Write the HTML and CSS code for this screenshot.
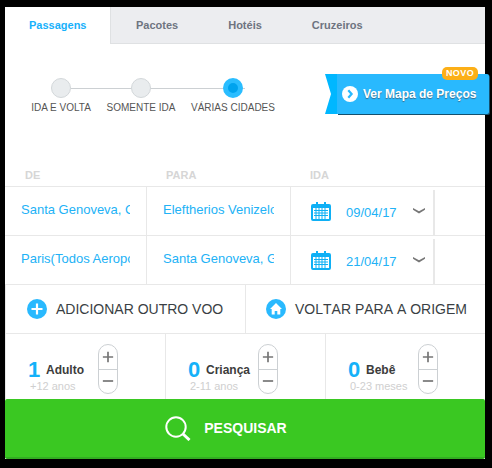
FILE: index.html
```html
<!DOCTYPE html>
<html lang="pt-BR">
<head>
<meta charset="utf-8">
<title>Passagens</title>
<link rel="stylesheet" href="styles.css">
</head>
<body>
<main class="panel">
  <nav class="tabs">
    <a class="tab tab-active">Passagens</a>
    <a class="tab tab-pacotes">Pacotes</a>
    <a class="tab tab-hoteis">Hotéis</a>
    <a class="tab tab-cruzeiros">Cruzeiros</a>
  </nav>

  <section class="options">
    <div class="steps">
      <span class="steps-line"></span>
      <div class="step step-1"><span class="dot"></span><span class="step-label">IDA E VOLTA</span></div>
      <div class="step step-2"><span class="dot"></span><span class="step-label">SOMENTE IDA</span></div>
      <div class="step step-3"><span class="dot dot-on"></span><span class="step-label">VÁRIAS CIDADES</span></div>
    </div>
    <a class="ribbon">
      <svg class="ribbon-tail" width="12" height="40" viewBox="0 0 12 40"><path d="M0 0H12V40H0L6 20Z" fill="#00b7ff"/></svg>
      <span class="ribbon-body">
        <svg class="ribbon-icon" width="16" height="16" viewBox="0 0 16 16"><circle cx="8" cy="8" r="8" fill="#fff"/><path d="M6.3 4.3 9.6 8 6.3 11.7" fill="none" stroke="#29b9fe" stroke-width="2.2"/></svg>
        <span class="ribbon-text">Ver Mapa de Preços</span>
      </span>
      <span class="badge">NOVO</span>
    </a>
  </section>

  <div class="flights">
    <div class="flight-head">
      <span class="head-de">DE</span>
      <span class="head-para">PARA</span>
      <span class="head-ida">IDA</span>
    </div>
    <div class="flight-row">
      <div class="cell cell-from"><span class="place">Santa Genoveva, Goiânia</span></div>
      <div class="cell cell-to"><span class="place">Eleftherios Venizelos</span></div>
      <div class="cell cell-date">
        <svg class="cal" width="20" height="19" viewBox="0 0 20 19"><use href="#cal-icon"/></svg>
        <span class="date">09/04/17</span>
        <svg class="chev" width="12" height="6" viewBox="0 0 12 6"><path d="M0 0 6 3.200 12 0V1.800L6 5.500 0 1.800Z" fill="#777"/></svg>
      </div>
      <div class="cell cell-end"></div>
    </div>
    <div class="flight-row">
      <div class="cell cell-from"><span class="place">Paris(Todos Aeroportos)</span></div>
      <div class="cell cell-to"><span class="place">Santa Genoveva, Goiânia</span></div>
      <div class="cell cell-date">
        <svg class="cal" width="20" height="19" viewBox="0 0 20 19"><use href="#cal-icon"/></svg>
        <span class="date">21/04/17</span>
        <svg class="chev" width="12" height="6" viewBox="0 0 12 6"><path d="M0 0 6 3.200 12 0V1.800L6 5.500 0 1.800Z" fill="#777"/></svg>
      </div>
      <div class="cell cell-end"></div>
    </div>
  </div>

  <div class="actions">
    <a class="action action-add">
      <svg width="20" height="20" viewBox="0 0 20 20"><circle cx="10" cy="10" r="10" fill="#29b9fe"/><path d="M10 4.5V15.500M4.500 10H15.500" stroke="#fff" stroke-width="2.200"/></svg>
      <span>ADICIONAR OUTRO VOO</span>
    </a>
    <a class="action action-back">
      <svg width="20" height="20" viewBox="0 0 20 20"><circle cx="10" cy="10" r="10" fill="#29b9fe"/><path d="M10 4 16 10H14.300V15.500H11.300V12H8.700V15.500H5.700V10H4Z" fill="#fff"/></svg>
      <span>VOLTAR PARA A ORIGEM</span>
    </a>
  </div>

  <div class="pax">
    <div class="pax-cell">
      <div class="pax-info">
        <div class="pax-main"><span class="pax-num">1</span><span class="pax-name">Adulto</span></div>
        <div class="pax-sub">+12 anos</div>
      </div>
      <div class="stepper"><span class="stepper-btn">
        <svg width="14" height="14" viewBox="0 0 14 14"><path d="M7 1V13M1 7H13" stroke="#777" stroke-width="2"/></svg></span><span class="stepper-btn stepper-minus">
        <svg width="14" height="14" viewBox="0 0 14 14"><path d="M1 7H13" stroke="#777" stroke-width="2"/></svg></span></div>
    </div>
    <div class="pax-cell">
      <div class="pax-info">
        <div class="pax-main"><span class="pax-num">0</span><span class="pax-name">Criança</span></div>
        <div class="pax-sub">2-11 anos</div>
      </div>
      <div class="stepper"><span class="stepper-btn">
        <svg width="14" height="14" viewBox="0 0 14 14"><path d="M7 1V13M1 7H13" stroke="#777" stroke-width="2"/></svg></span><span class="stepper-btn stepper-minus">
        <svg width="14" height="14" viewBox="0 0 14 14"><path d="M1 7H13" stroke="#777" stroke-width="2"/></svg></span></div>
    </div>
    <div class="pax-cell">
      <div class="pax-info">
        <div class="pax-main"><span class="pax-num">0</span><span class="pax-name">Bebê</span></div>
        <div class="pax-sub">0-23 meses</div>
      </div>
      <div class="stepper"><span class="stepper-btn">
        <svg width="14" height="14" viewBox="0 0 14 14"><path d="M7 1V13M1 7H13" stroke="#777" stroke-width="2"/></svg></span><span class="stepper-btn stepper-minus">
        <svg width="14" height="14" viewBox="0 0 14 14"><path d="M1 7H13" stroke="#777" stroke-width="2"/></svg></span></div>
    </div>
  </div>

  <a class="search">
    <svg width="26" height="25" viewBox="0 0 26 25"><circle cx="11" cy="11" r="9.700" fill="none" stroke="#fff" stroke-width="2"/><path d="M18 18 24.500 24" stroke="#fff" stroke-width="3"/></svg>
    <span>PESQUISAR</span>
  </a>
</main>

<svg class="defs" width="0" height="0">
  <symbol id="cal-icon" viewBox="0 0 20 19">
    <path d="M2 2H5V0H7V2H13V0H15V2H18Q20 2 20 4V17Q20 19 18 19H2Q0 19 0 17V4Q0 2 2 2Z" fill="#0fb0f5"/>
    <path d="M2 6H18V17H2Z" fill="#fff"/>
    <path d="M5 6V17M8 6V17M11 6V17M14 6V17M3 8.500H17M3 11H17M3 13.500H17" stroke="#0fb0f5" stroke-width="1"/>
  </symbol>
</svg>
</body>
</html>
```
FILE: styles.css
```css
* { box-sizing: border-box; }
html, body { margin: 0; padding: 0; }
body {
  width: 492px;
  height: 468px;
  background: #000;
  overflow: hidden;
  font-family: "Liberation Sans", Arial, sans-serif;
}
.defs { display: block; }
.panel {
  position: relative;
  width: 480px;
  height: 452px;
  margin: 7px 0 0 5px;
  background: #fff;
  display: flex;
  flex-direction: column;
}
.tabs {
  display: flex;
  flex: none;
  height: 37px;
  background: #ecedf0;
  border-bottom: 1px solid #dfe1e3;
  font-size: 11px;
  font-weight: bold;
  line-height: 36px;
  color: #6e7480;
}
.tab-active {
  width: 106px;
  margin-bottom: -1px;
  padding-left: 24px;
  background: #fff;
  border-right: 1px solid #dfe1e3;
  color: #18b1fb;
}
.tab-pacotes { margin-left: 25px; }
.tab-hoteis { margin-left: 50px; }
.tab-cruzeiros { margin-left: 50px; }

.options {
  display: flex;
  flex: none;
  align-items: flex-start;
  height: 116px;
  padding-top: 30px;
}
.steps {
  position: relative;
  flex: none;
  width: 320px;
  height: 44px;
  margin-top: 4px;
  display: flex;
}
.steps-line {
  position: absolute;
  left: 66px;
  top: 10px;
  width: 174px;
  height: 1px;
  background: #ccd0d3;
}
.step {
  position: relative;
  display: flex;
  flex-direction: column;
  align-items: center;
  gap: 3px;
  flex: none;
}
.step-1 { margin-left: 25px; width: 62px; }
.step-2 { margin-left: 15px; width: 68px; }
.step-3 { margin-left: 16px; width: 84px; }
.dot {
  width: 20px;
  height: 20px;
  border-radius: 50%;
  background: #e9ecee;
  border: 1px solid #d3d7da;
}
.dot-on {
  background: #00a3ee;
  border: 5px solid #2abdff;
}
.step-label {
  font-size: 10px;
  line-height: 14px;
  color: #555;
  white-space: nowrap;
}
.ribbon {
  position: relative;
  display: flex;
  flex: none;
  width: 164px;
  height: 40px;
}
.ribbon-tail { display: block; flex: none; }
.ribbon-body {
  flex: 1;
  display: flex;
  align-items: center;
  gap: 5px;
  padding: 0 0 1px 5px;
  background: #29b9fe;
  border-radius: 0 2px 2px 0;
  box-shadow: 1px 1px 0 #14506e;
}
.ribbon-text {
  font-size: 12px;
  font-weight: bold;
  color: #fff;
  white-space: nowrap;
  text-shadow: 0 1px 1px #3a6a88;
}
.badge {
  position: absolute;
  top: -7px;
  right: 11px;
  width: 36px;
  height: 13px;
  border-radius: 5px;
  background: #fcaf17;
  color: #fff;
  font-size: 9px;
  font-weight: bold;
  line-height: 13px;
  text-align: center;
  letter-spacing: 0.4px;
}

.flight-head {
  display: flex;
  height: 26px;
  padding-top: 6px;
  font-size: 11px;
  font-weight: bold;
  line-height: 18px;
  color: #d6d6d6;
}
.head-de { margin-left: 20px; width: 141px; }
.head-para { width: 144px; }
.flight-row {
  display: grid;
  grid-template-columns: 142px 144px 144px 1fr;
  height: 49px;
  border-top: 1px solid #e8e8e8;
}
.cell {
  overflow: hidden;
  display: flex;
  align-items: center;
}
.cell-from { padding: 0 16px; border-right: 1px solid #e8e8e8; }
.cell-to { padding: 0 16px; border-right: 1px solid #e8e8e8; }
.place {
  font-size: 13px;
  color: #22b2f6;
  white-space: nowrap;
  overflow: hidden;
  display: block;
  margin-top: -3px;
}
.cell-date { padding-left: 20px; position: relative; align-items: flex-start; border-right: 2px solid #e8e8e8; margin-top: 3px; }
.cal { margin-top: 12px; flex: none; }
.date { margin: 14px 0 0 15px; font-size: 13px; line-height: 17px; color: #22b2f6; }
.chev { margin: 18px 0 0 16px; flex: none; }

.actions {
  display: grid;
  flex: none;
  grid-template-columns: 240px 1fr;
  height: 49px;
  border-top: 1px solid #e8e8e8;
  border-left: 1px solid #e8e8e8;
}
.action {
  display: flex;
  align-items: center;
  font-size: 14px;
  font-kerning: none;
  color: #3a3f44;
  white-space: nowrap;
  gap: 9px;
}
.action-add { padding-left: 21px; border-right: 1px solid #e8e8e8; }
.action-back { padding-left: 20px; }

.pax {
  display: grid;
  flex: none;
  grid-template-columns: 160px 160px 1fr;
  height: 66px;
  border-top: 1px solid #e8e8e8;
  border-left: 1px solid #e8e8e8;
}
.pax-cell {
  display: flex;
  position: relative;
  padding: 10px 0 0 22px;
  border-right: 1px solid #e8e8e8;
}
.pax-cell:last-child { border-right: 0; }
.pax-info { width: 70px; flex: none; padding-top: 15px; }
.pax-main { display: flex; align-items: center; height: 22px; gap: 7px; }
.pax-num { font-size: 22px; font-weight: bold; color: #14b1f9; line-height: 22px; width: 11px; }
.pax-name { font-size: 12px; font-weight: bold; color: #3c3c3c; white-space: nowrap; }
.pax-sub { margin: -2px 0 0 2px; font-size: 11px; color: #cfcfcf; white-space: nowrap; line-height: 14px; }
.stepper {
  width: 20px;
  height: 50px;
  border: 1px solid #ccd0d3;
  border-radius: 10px;
  display: flex;
  flex-direction: column;
  flex: none;
}
.stepper-btn {
  flex: 1;
  display: flex;
  align-items: center;
  justify-content: center;
}
.stepper-btn svg { width: 12px; height: 12px; }
.stepper-minus { border-top: 1px solid #ccd0d3; }

.search {
  flex: 1;
  display: flex;
  align-items: center;
  justify-content: center;
  gap: 13px;
  padding-right: 38px;
  background: #3ac822;
  border-bottom: 2px solid #33ad22;
  border-radius: 2px;
  color: #fff;
  font-size: 14px;
  font-weight: bold;
}
```
